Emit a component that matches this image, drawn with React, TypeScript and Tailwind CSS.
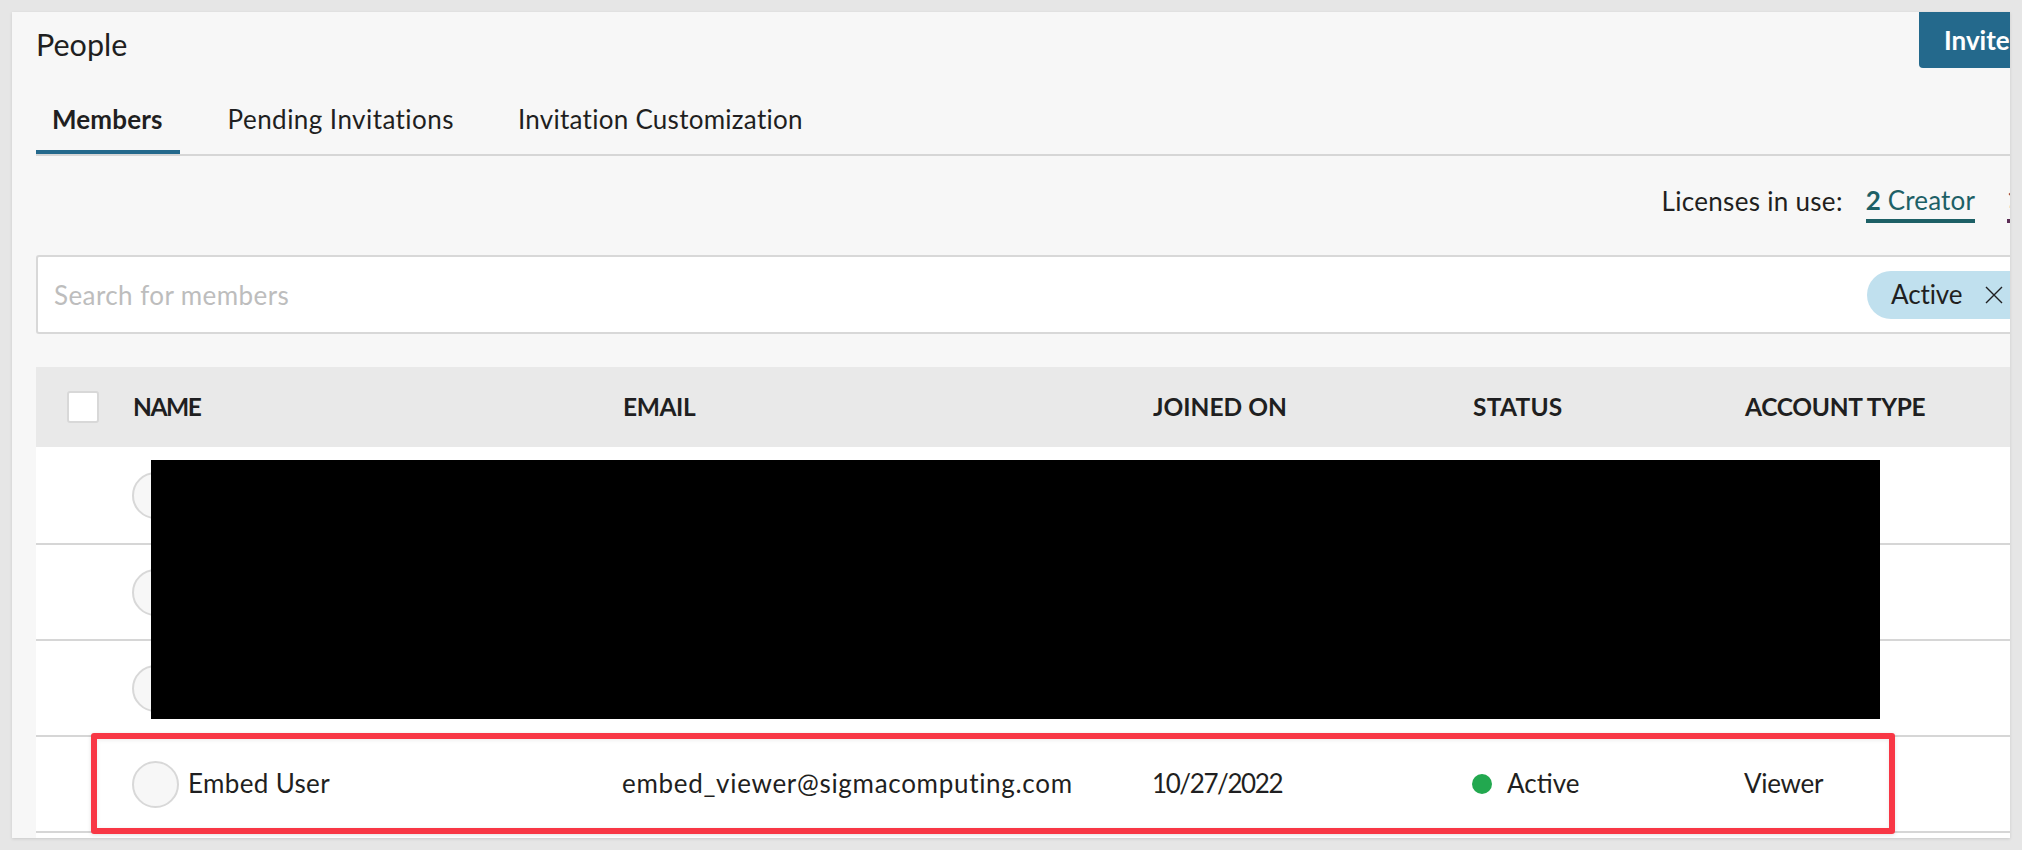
const rows = [
  { h: "h-[98px]", name: "", email: "", date: "", status: "", type: "" },
  { h: "h-[96px]", name: "", email: "", date: "", status: "", type: "" },
  { h: "h-[96px]", name: "", email: "", date: "", status: "", type: "" },
  { h: "h-[96px]", name: "Embed User", email: "embed_viewer@sigmacomputing.com", date: "10/27/2022", status: "Active", type: "Viewer" },
];

const cols = "grid grid-cols-[490px_530px_320px_272px_1fr] items-center";

export default function App() {
  return (
    <div className="h-[850px] w-full overflow-hidden bg-[#e6e6e6] pl-3 pr-3 pt-3 text-[26px] text-[#1f1f21] [font-family:Lato,'Noto_Sans',sans-serif]">
      <div className="relative h-[826px] w-[1998px] overflow-hidden bg-[#f7f7f7] pl-6 shadow-[0_1px_3px_rgba(0,0,0,0.12)]">
        <div className="flex h-[66px] items-start justify-between">
          <div className="pb-[2px] text-[30.5px] leading-[64px]">People</div>
          <button className="h-14 w-[91px] overflow-hidden rounded-bl-[4px] bg-[#24698c] pl-[25px] text-left text-[26px] font-bold whitespace-nowrap text-white">Invite</button>
        </div>

        <div className="flex h-[78px] gap-8 border-b-2 border-[#d6d6d6]">
          <div className="flex h-[76px] items-center border-b-4 border-[#24698c] pl-4 pr-[17px] pt-[10px] font-bold tracking-[0.15px]">Members</div>
          <div className="flex h-[76px] items-center border-b-4 border-transparent px-4 pt-[10px] tracking-[0.45px]">Pending Invitations</div>
          <div className="flex h-[76px] items-center border-b-4 border-transparent px-4 pt-[10px] tracking-[0.27px]">Invitation Customization</div>
        </div>

        <div className="flex h-[99px] items-start justify-end pt-[21px]">
          <span className="flex h-[46px] items-center pt-[2px] tracking-[0.3px]">Licenses in use:</span>
          <div className="ml-[23px] flex h-[46px] items-center gap-[7px] border-b-4 border-[#1d6066] pt-1 text-[#1d6066]">
            <span className="font-bold">2</span>
            <span className="tracking-[0.15px]">Creator</span>
          </div>
          <div className="ml-8 flex h-[46px] w-[3px] items-center overflow-hidden border-b-4 border-[#5c2d55] font-bold text-[#5c2d55]">1</div>
        </div>

        <div className="flex h-[79px] items-center rounded-l-[3px] border-y-2 border-l-2 border-[#d8d8d8] bg-white pl-4">
          <span className="flex-1 pt-[2px] tracking-[0.42px] text-[#bdbdbd]">Search for members</span>
          <div className="flex h-12 w-[143px] items-center rounded-l-full bg-[#c0e0ee] pl-6">
            <span className="tracking-[-0.1px]">Active</span>
            <svg className="ml-[23px] h-[18px] w-[18px]" viewBox="0 0 18 18" fill="none" stroke="#1f1f21" strokeWidth="1.4">
              <path d="M1 1l16 16M17 1L1 17" />
            </svg>
          </div>
        </div>

        <div className="mt-[33px] flex h-20 items-center bg-[#e9e9e9] pl-[31px] uppercase">
          <div className="mr-[34px] h-[32px] w-[32px] shrink-0 rounded-[3px] border-2 border-[#d8d8d8] bg-white" />
          <div className={`${cols} flex-1 text-[24.5px] font-bold`}>
            <span className="tracking-[-1.4px]">Name</span>
            <span className="tracking-[-0.4px]">Email</span>
            <span>Joined On</span>
            <span className="tracking-[0.25px]">Status</span>
            <span className="tracking-[-0.3px]">Account Type</span>
          </div>
        </div>

        <div className="bg-white pb-2">
          {rows.map((r, i) => (
            <div key={i} className={`${cols} ${r.h} border-b-2 border-[#d6d6d6] pl-[97px]`}>
              <div className="flex items-center gap-[10px]">
                <div className="-ml-[1px] h-[47px] w-[47px] rounded-full border-2 border-[#d8d8d8] bg-[#f7f7f7]" />
                <span className="-ml-[1px] pb-[2px] tracking-[0.35px]">{r.name}</span>
              </div>
              <span className="-ml-[1px] pb-[2px] tracking-[0.7px]">{r.email}</span>
              <span className="-ml-[1px] pb-[2px] tracking-[-1.4px]">{r.date}</span>
              {r.status ? (
                <div className="-ml-[1px] flex items-center gap-[15px]">
                  <span className="h-5 w-5 rounded-full bg-[#22a84f]" />
                  <span className="pb-[2px]">{r.status}</span>
                </div>
              ) : (
                <span />
              )}
              <span className="-ml-[1px] pb-[2px] tracking-[-0.3px]">{r.type}</span>
            </div>
          ))}
        </div>

        <div className="absolute left-[139px] top-[448px] h-[259px] w-[1729px] bg-black" />
        <div className="absolute left-[79px] top-[721px] h-[101px] w-[1804px] rounded-[3px] border-[6px] border-[#f83745] shadow-[0_1px_4px_rgba(0,0,0,0.12),inset_0_1px_4px_rgba(0,0,0,0.08)]" />
      </div>
    </div>
  );
}
